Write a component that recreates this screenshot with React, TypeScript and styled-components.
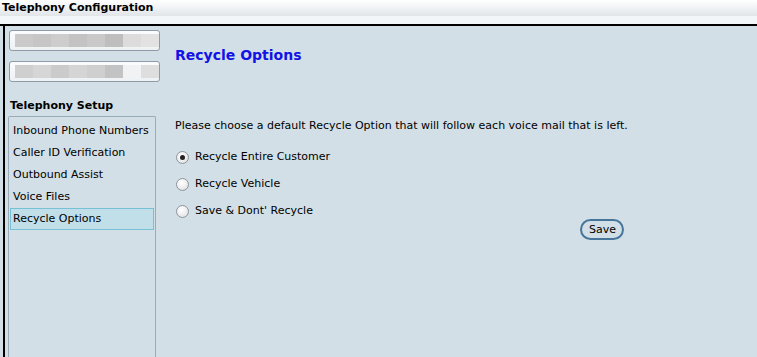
import React from "react";
import styled, { createGlobalStyle } from "styled-components";

const Global = createGlobalStyle`
  html, body { margin: 0; padding: 0; }
  body {
    font-family: "DejaVu Sans", Verdana, sans-serif;
    background: #d3dfe6;
    width: 757px;
    height: 357px;
    overflow: hidden;
  }
`;

const Page = styled.div`
  display: flex;
  flex-direction: column;
  width: 757px;
  height: 357px;
`;

const TitleBar = styled.div`
  height: 16px;
  background: linear-gradient(#ffffff, #e1e5e8);
  font-weight: bold;
  font-size: 11px;
  line-height: 16px;
  padding-left: 2px;
  color: #000;
`;

const Strip = styled.div`
  height: 8px;
  background: #f3f6f8;
  border-bottom: 2px solid #000;
`;

const Body = styled.div`
  flex: 1;
  display: flex;
  margin-left: 3px;
  border-left: 2px solid #000;
  min-height: 0;
`;

const Side = styled.div`
  width: 157px;
  display: flex;
  flex-direction: column;
  padding: 4px 0 0 3px;
  box-sizing: border-box;
`;

const Field = styled.div`
  width: 151px;
  height: 21px;
  box-sizing: border-box;
  border: 1px solid #8f9ba6;
  border-radius: 3px;
  background: linear-gradient(#fbfcfd, #eef1f3);
  margin-left: 1px;
  margin-bottom: 10px;
  display: flex;
  align-items: center;
  padding-left: 5px;
`;

const Blur = styled.span<{ $c: string }>`
  display: block;
  width: 18px;
  height: 13px;
  background: ${(p) => p.$c};
  filter: blur(0.6px);
`;

const SectionTitle = styled.div`
  margin-top: 7px;
  font-weight: bold;
  font-size: 11px;
  line-height: 14px;
  padding-left: 2px;
`;

const NavBox = styled.div`
  margin-top: 3px;
  width: 148px;
  flex: 1;
  border: 1px solid #9aabb8;
  border-bottom: none;
  border-radius: 2px 2px 0 0;
  box-sizing: border-box;
  padding: 3px 1px 1px;
  display: flex;
  flex-direction: column;
`;

const NavItem = styled.div<{ $active?: boolean }>`
  height: 22px;
  box-sizing: border-box;
  font-size: 11px;
  line-height: 20px;
  padding-left: 2px;
  color: #000;
  border: 1px solid ${(p) => (p.$active ? "#78c0d6" : "transparent")};
  background: ${(p) => (p.$active ? "#c1dfe9" : "transparent")};
`;

const Main = styled.div`
  flex: 1;
  padding: 21px 0 0 13px;
  display: flex;
  flex-direction: column;
`;

const Heading = styled.h1`
  margin: 0;
  font-size: 14px;
  line-height: 17px;
  font-weight: bold;
  color: #1212e6;
`;

const Intro = styled.p`
  margin: 55px 0 0 0;
  font-size: 11px;
  line-height: 14px;
`;

const Options = styled.div`
  margin: 17px 0 0 1px;
  display: flex;
  flex-direction: column;
  gap: 13px;
`;

const Option = styled.label`
  display: flex;
  align-items: center;
  gap: 6px;
  font-size: 11px;
  line-height: 14px;
`;

const RadioDot = styled.span<{ $checked?: boolean }>`
  width: 13px;
  height: 13px;
  border-radius: 50%;
  box-sizing: border-box;
  border: 1px solid #8e969d;
  background: radial-gradient(circle at 40% 35%, #ffffff 0%, #f1f1f1 45%, #d2d5d8 100%);
  display: flex;
  align-items: center;
  justify-content: center;
  &::after {
    content: "";
    width: 5px;
    height: 5px;
    border-radius: 50%;
    background: ${(p) => (p.$checked ? "#222" : "transparent")};
  }
`;

const SaveRow = styled.div`
  margin-top: 1px;
  display: flex;
  padding-left: 405px;
`;

const SaveButton = styled.button`
  font-family: "DejaVu Sans", Verdana, sans-serif;
  font-size: 11px;
  height: 21px;
  padding: 0 6px 0 7px;
  border: 2px solid #46759b;
  border-radius: 11px;
  background: #d3dfe6;
  color: #000;
  line-height: 15px;
`;

const blur1 = ["#cacaca", "#c6c6c6", "#cdcdcd", "#c3c3c3", "#c9c9c9", "#bebebe", "#dcdcdc", "#e2e2e2"];
const blur2 = ["#cfcfcf", "#d6d6d6", "#cbcbcb", "#d5d5d5", "#cfcfcf", "#c3c3c3", "#f0f2f4", "#dedede"];

export default function App() {
  return (
    <>
      <Global />
      <Page>
        <TitleBar>Telephony Configuration</TitleBar>
        <Strip />
        <Body>
          <Side>
            <Field>
              {blur1.map((c, i) => (
                <Blur key={i} $c={c} />
              ))}
            </Field>
            <Field>
              {blur2.map((c, i) => (
                <Blur key={i} $c={c} />
              ))}
            </Field>
            <SectionTitle>Telephony Setup</SectionTitle>
            <NavBox>
              <NavItem>Inbound Phone Numbers</NavItem>
              <NavItem>Caller ID Verification</NavItem>
              <NavItem>Outbound Assist</NavItem>
              <NavItem>Voice Files</NavItem>
              <NavItem $active>Recycle Options</NavItem>
            </NavBox>
          </Side>
          <Main>
            <Heading>Recycle Options</Heading>
            <Intro>Please choose a default Recycle Option that will follow each voice mail that is left.</Intro>
            <Options>
              <Option>
                <RadioDot $checked />
                Recycle Entire Customer
              </Option>
              <Option>
                <RadioDot />
                Recycle Vehicle
              </Option>
              <Option>
                <RadioDot />
                Save &amp; Dont' Recycle
              </Option>
            </Options>
            <SaveRow>
              <SaveButton>Save</SaveButton>
            </SaveRow>
          </Main>
        </Body>
      </Page>
    </>
  );
}
